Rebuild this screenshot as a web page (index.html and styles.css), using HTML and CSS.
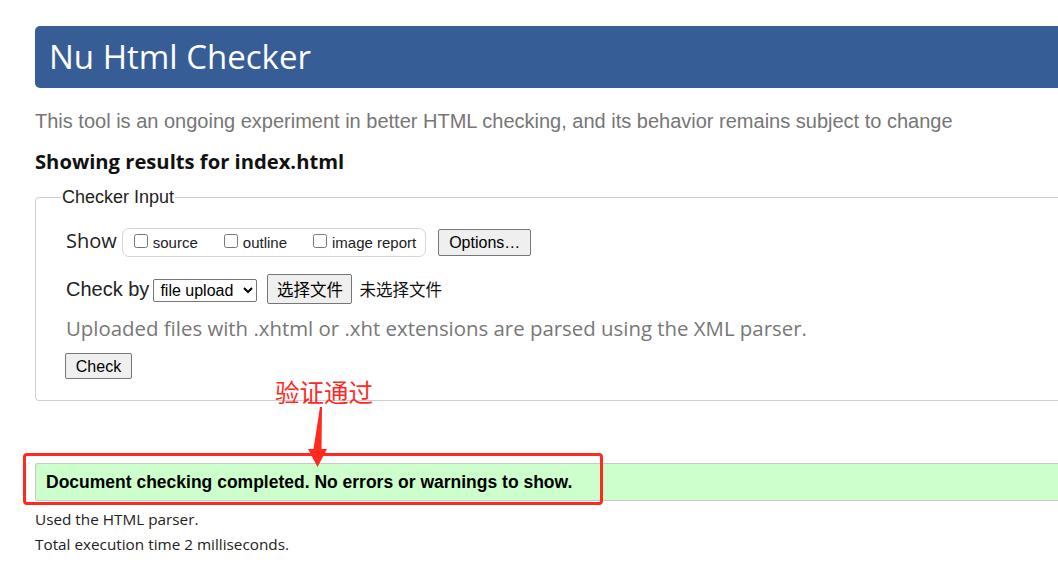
FILE: index.html
```html
<!DOCTYPE html>
<html lang="en">
<head>
<meta charset="utf-8">
<title>Nu Html Checker</title>
<link rel="stylesheet" href="styles.css">
</head>
<body>
<div class="page">
  <h1 class="masthead">Nu Html Checker</h1>
  <p class="tagline">This tool is an ongoing experiment in better HTML checking, and its behavior remains subject to change</p>
  <h2 class="results-for">Showing results for index.html</h2>
  <fieldset class="checker-input">
    <legend>Checker Input</legend>
    <div class="row">
      <span class="row-label seg">Show</span>
      <span class="showbox">
        <label class="opt"><input type="checkbox">source</label>
        <label class="opt"><input type="checkbox">outline</label>
        <label class="opt"><input type="checkbox">image report</label>
      </span>
      <button class="btn btn-options" type="button">Options…</button>
    </div>
    <div class="row row-check">
      <span class="row-label">Check by</span>
      <select class="sel"><option>file upload</option></select>
      <span class="file-btn-wrap"><button class="btn btn-file" type="button">选择文件</button></span>
      <span class="file-none">未选择文件</span>
    </div>
    <p class="hint">Uploaded files with .xhtml or .xht extensions are parsed using the XML parser.</p>
    <div class="submit-row"><button class="btn btn-check" type="button">Check</button></div>
  </fieldset>
  <div class="success">Document checking completed. No errors or warnings to show.</div>
  <p class="meta meta-first">Used the HTML parser.</p>
  <p class="meta">Total execution time 2 milliseconds.</p>

  <div class="note">验证通过</div>
  <svg class="arrow" width="30" height="64" viewBox="0 0 30 64" aria-hidden="true">
    <polygon points="15,0 17,0 16.5,42 22,42 12.5,60 3,42 8.5,42" fill="#fe2a1f"/>
  </svg>
  <div class="highlight"></div>
</div>
</body>
</html>
```
FILE: styles.css
```css
html, body {
  margin: 0;
  padding: 0;
  overflow: hidden;
  background: #fff;
}
.page {
  position: relative;
  width: 1100px;
  padding: 26px 0 0 35px;
  font-family: "Liberation Sans", Arial, sans-serif;
  color: #000;
}
.seg {
  font-family: "Open Sans", "Noto Sans", sans-serif;
}
.masthead {
  margin: 0;
  height: 62px;
  display: flex;
  align-items: center;
  padding: 0 14px;
  background: #365d95;
  color: #fff;
  border-radius: 5px 0 0 5px;
  font-family: "Open Sans", "Noto Sans", sans-serif;
  font-weight: 400;
  font-size: 33px;
  line-height: 40px;
}
.tagline {
  margin: 22px 0 0;
  font-size: 20px;
  line-height: 23px;
  color: #767676;
}
.results-for {
  margin: 16px 0 0;
  font-family: "Open Sans", "Noto Sans", sans-serif;
  font-weight: 700;
  font-size: 20.2px;
  line-height: 24px;
  color: #111;
}
.checker-input {
  margin: 13px 0 0;
  padding: 19px 0 21px 30px;
  border: 1px solid #cfcfcf;
  border-radius: 4px;
  min-width: 0;
}
.checker-input legend {
  margin-left: -5px;
  padding: 0 1px;
  font-size: 18px;
  line-height: 22px;
  color: #222;
}
.row {
  display: flex;
  align-items: baseline;
}
.row-label {
  font-size: 20px;
  color: #222;
}
.row .seg {
  font-size: 20px;
  margin-right: 5px;
}
.showbox {
  display: flex;
  align-items: center;
  height: 27px;
  padding: 0 9px 0 7px;
  border: 1px solid #d6d6d6;
  border-radius: 7px;
  gap: 22px;
}
.opt {
  display: block;
  font-size: 15px;
  line-height: 16px;
  color: #222;
}
.opt input {
  width: 14px;
  height: 14px;
  margin: 0 5px 3px 4px;
}
.btn {
  font-family: "Liberation Sans", Arial, sans-serif;
  font-size: 16px;
  line-height: 19px;
  color: #000;
  background: #efefef;
  border: 1px solid #767676;
  border-radius: 2px;
  padding: 3px 10px;
}
.btn-options {
  margin-left: 12px;
  width: 93px;
  height: 27px;
  padding: 3px 0;
}
.row-check {
  margin-top: 17px;
}
.row-check .row-label {
  margin-right: 4px;
}
.sel {
  width: 104px;
  height: 23px;
  font-family: "Liberation Sans", Arial, sans-serif;
  font-size: 16px;
  color: #000;
  background: #fff;
  border: 1px solid #767676;
  border-radius: 2px;
  padding: 0 0 0 2px;
}
.btn-file {
  margin-left: 10px;
  width: 85px;
  height: 30px;
  padding: 0;
  font-family: "Noto Sans CJK SC", sans-serif;
  font-size: 16.5px;
  line-height: 28px;
}
.file-btn-wrap {
  display: inline-flex;
}
.file-none {
  margin-left: 7px;
  font-family: "Noto Sans CJK SC", sans-serif;
  font-size: 16.5px;
  color: #111;
}
.hint {
  margin: 11px 0 0;
  font-family: "Open Sans", "Noto Sans", sans-serif;
  font-size: 20.4px;
  line-height: 26px;
  color: #777;
}
.submit-row {
  margin-top: 12px;
}
.btn-check {
  margin-left: -1px;
  width: 67px;
  height: 26px;
  padding: 0;
}
.success {
  margin-top: 62px;
  height: 36px;
  line-height: 36px;
  padding-left: 10px;
  background: #ccffcc;
  border: 1px solid #c8c8c8;
  border-right: 0;
  border-radius: 3px 0 0 3px;
  font-weight: 700;
  font-size: 17.5px;
  color: #000;
}
.meta {
  margin: 0;
  font-family: "Open Sans", "Noto Sans", sans-serif;
  font-size: 15.3px;
  line-height: 25px;
  color: #222;
}
.meta-first {
  margin-top: 6px;
}
.note {
  position: absolute;
  left: 275px;
  top: 380px;
  font-family: "Noto Sans CJK SC", sans-serif;
  font-size: 24.5px;
  line-height: 24px;
  color: #fe2a1f;
}
.arrow {
  position: absolute;
  left: 305px;
  top: 407px;
}
.highlight {
  position: absolute;
  left: 23px;
  top: 453px;
  width: 574px;
  height: 46px;
  border: 3px solid #fe2a1f;
  border-radius: 4px;
}
```
